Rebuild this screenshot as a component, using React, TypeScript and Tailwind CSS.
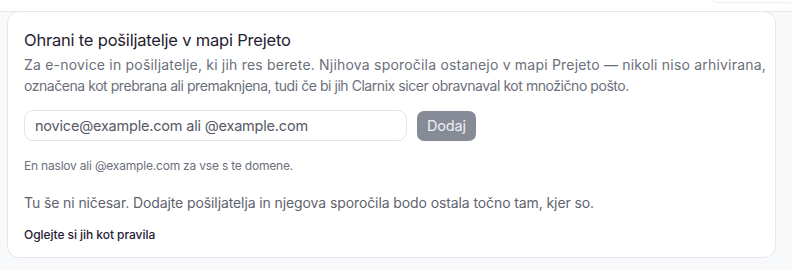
import React from "react";

export default function App() {
  return (
    <div className="w-[792px] h-[270px] bg-[#f8f9fb] overflow-hidden" style={{ fontFamily: "Inter, 'Noto Sans', sans-serif" }}>
      <div className="relative h-[12px] bg-white border-b border-[#e5e7eb]">
        <div className="absolute right-0 top-[-10px] w-[80px] h-[12px] bg-white rounded-bl-md shadow-[0_1px_2px_rgba(0,0,0,0.08)]" />
      </div>
      <div className="pl-[7px] pr-[16px] -mt-px">
        <div className="bg-white border border-[#e5e7eb] rounded-[12px] px-[16px] pt-[17px] pb-[14px] h-[247px]">
          <h2 className="text-[16.5px] leading-[22px] text-[#1f2230] tracking-[-0.2px]">Ohrani te pošiljatelje v mapi Prejeto</h2>
          <p className="mt-[3px] text-[14px] leading-[21px] text-[#6b6f7b] whitespace-nowrap">
            <span className="block tracking-[0.2px]">Za e-novice in pošiljatelje, ki jih res berete. Njihova sporočila ostanejo v mapi Prejeto — nikoli niso arhivirana,</span>
            <span className="block tracking-[-0.45px]">označena kot prebrana ali premaknjena, tudi če bi jih Clarnix sicer obravnaval kot množično pošto.</span>
          </p>
          <div className="mt-[14px] flex items-center gap-[10px]">
            <div className="w-[383px] h-[31px] border border-[#e2e4e8] rounded-[9px] flex items-center px-[10px] text-[14.5px] text-[#555a66] tracking-[-0.2px]">
              novice@example.com ali @example.com
            </div>
            <button className="h-[30px] px-[10px] rounded-[7px] bg-[#878b97] text-[#eef0f3] text-[14.5px] tracking-[-0.2px]">Dodaj</button>
          </div>
          <p className="mt-[17px] text-[12px] leading-[16px] text-[#6b6f7b] tracking-[-0.2px]">En naslov ali @example.com za vse s te domene.</p>
          <p className="mt-[19px] text-[14px] leading-[20px] text-[#5f636e] tracking-[-0.1px]">Tu še ni ničesar. Dodajte pošiljatelja in njegova sporočila bodo ostala točno tam, kjer so.</p>
          <p className="mt-[14px] text-[12px] leading-[16px] text-[#1e2235] font-medium tracking-[-0.05px]">Oglejte si jih kot pravila</p>
        </div>
      </div>
    </div>
  );
}
